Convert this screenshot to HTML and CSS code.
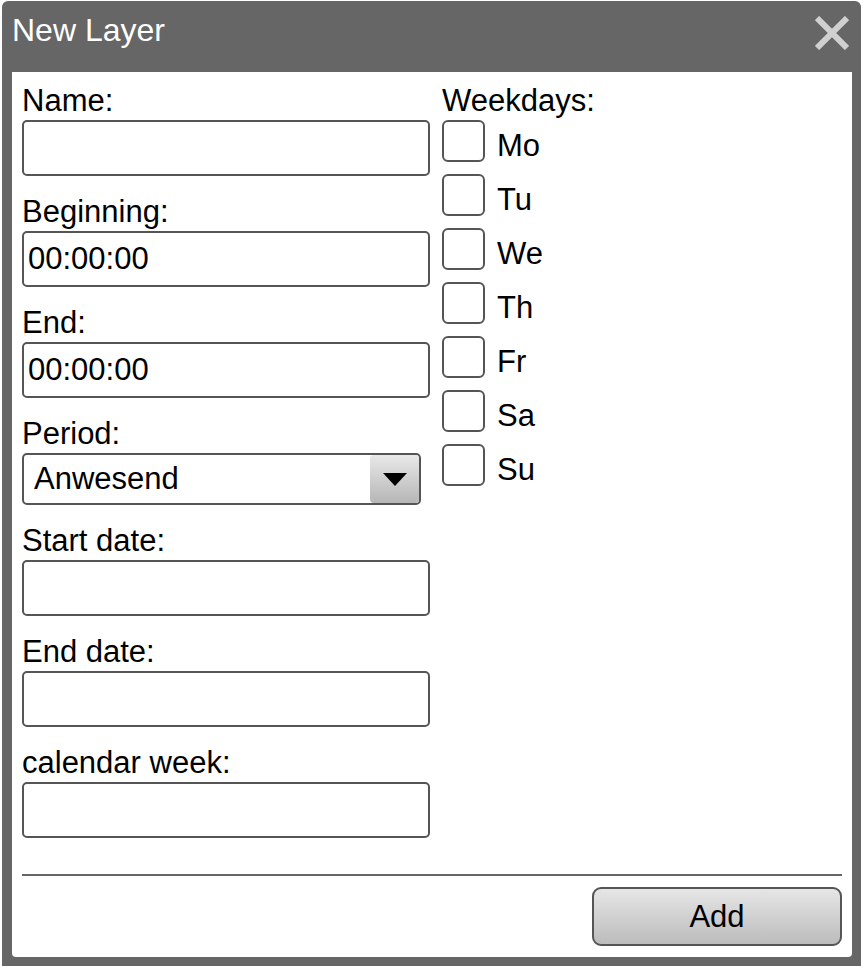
FILE: index.html
```html
<!DOCTYPE html>
<html lang="en">
<head>
<meta charset="utf-8">
<title>New Layer</title>
<link rel="stylesheet" href="styles.css">
</head>
<body>
<div class="dialog">
  <div class="titlebar">
    <span class="title">New Layer</span>
    <button class="close" aria-label="Close">
      <svg width="34" height="34" viewBox="0 0 34 34"><path d="M2 2 L32 32 M32 2 L2 32" stroke="#d0d0d0" stroke-width="6" fill="none"/></svg>
    </button>
  </div>
  <div class="content">
    <div class="columns">
      <div class="col-left">
        <div class="field">
          <label class="label">Name:</label>
          <input class="input" type="text" value="">
        </div>
        <div class="field">
          <label class="label">Beginning:</label>
          <input class="input" type="text" value="00:00:00">
        </div>
        <div class="field">
          <label class="label">End:</label>
          <input class="input" type="text" value="00:00:00">
        </div>
        <div class="field">
          <label class="label">Period:</label>
          <div class="select">
            <span class="select-value">Anwesend</span>
            <span class="select-btn"><span class="tri"></span></span>
          </div>
        </div>
        <div class="field">
          <label class="label">Start date:</label>
          <input class="input" type="text" value="">
        </div>
        <div class="field">
          <label class="label">End date:</label>
          <input class="input" type="text" value="">
        </div>
        <div class="field last">
          <label class="label">calendar week:</label>
          <input class="input" type="text" value="">
        </div>
      </div>
      <div class="col-right">
        <div class="label">Weekdays:</div>
        <div class="days">
          <label class="day"><input type="checkbox" class="cb"><span>Mo</span></label>
          <label class="day"><input type="checkbox" class="cb"><span>Tu</span></label>
          <label class="day"><input type="checkbox" class="cb"><span>We</span></label>
          <label class="day"><input type="checkbox" class="cb"><span>Th</span></label>
          <label class="day"><input type="checkbox" class="cb"><span>Fr</span></label>
          <label class="day"><input type="checkbox" class="cb"><span>Sa</span></label>
          <label class="day"><input type="checkbox" class="cb"><span>Su</span></label>
        </div>
      </div>
    </div>
    <div class="sep"></div>
    <div class="footer">
      <button class="btn-add">Add</button>
    </div>
  </div>
</div>
</body>
</html>
```

FILE: styles.css
```css
html, body {
  margin: 0;
  padding: 0;
  background: #ffffff;
  overflow: hidden;
}
body {
  font-family: "Liberation Sans", Arial, sans-serif;
  color: #000;
}
.dialog {
  margin: 1px 0 0 2px;
  width: 859px;
  height: 975px;
  background: #666666;
  border-radius: 6px 6px 0 0;
  display: flex;
  flex-direction: column;
}
.titlebar {
  height: 71px;
  flex: none;
  display: flex;
  align-items: flex-start;
  justify-content: space-between;
  padding: 0 12px 0 10px;
  box-sizing: border-box;
}
.title {
  color: #ffffff;
  font-size: 32px;
  line-height: 36px;
  margin-top: 11px;
}
.close {
  margin-top: 15px;
  padding: 0;
  border: 0;
  background: none;
  width: 34px;
  height: 34px;
  display: block;
}
.close svg { display: block; }
.content {
  background: #ffffff;
  margin: 0 9px 0 10px;
  padding: 14px 10px 11px 10px;
  border-radius: 0 0 4px 4px;
  height: 885px;
  box-sizing: border-box;
}
.columns {
  display: flex;
  gap: 12px;
}
.col-left {
  width: 408px;
  flex: none;
}
.col-right {
  flex: 1;
}
.field {
  margin-bottom: 21px;
}
.field.last { margin-bottom: 0; }
.label {
  display: block;
  font-size: 31px;
  line-height: 30px;
  height: 30px;
  padding-bottom: 4px;
}
.input {
  display: block;
  box-sizing: border-box;
  width: 408px;
  height: 56px;
  margin: 0;
  border: 2px solid #555555;
  border-radius: 5px;
  padding: 0 4px;
  font-family: "Liberation Sans", Arial, sans-serif;
  font-size: 31px;
  color: #000;
  background: #fff;
  outline: none;
}
.select {
  box-sizing: border-box;
  width: 399px;
  height: 52px;
  border: 2px solid #555555;
  border-radius: 5px;
  display: flex;
  align-items: center;
  justify-content: space-between;
  padding-left: 10px;
}
.select-value {
  font-size: 31px;
}
.select-btn {
  width: 49px;
  height: 48px;
  border-radius: 4px;
  background: linear-gradient(#e8e8e8, #b6b6b6);
  display: flex;
  align-items: center;
  justify-content: center;
}
.tri {
  width: 0;
  height: 0;
  border-left: 12px solid transparent;
  border-right: 12px solid transparent;
  border-top: 13px solid #000;
  margin-left: 1px;
}
.days {
  display: flex;
  flex-direction: column;
  gap: 12px;
}
.day {
  display: flex;
  align-items: center;
  gap: 12px;
  height: 42px;
  font-size: 31px;
}
.day span { padding-top: 10px; line-height: 34px; }
.cb {
  appearance: none;
  -webkit-appearance: none;
  margin: 0;
  width: 43px;
  height: 42px;
  box-sizing: border-box;
  border: 2px solid #555555;
  border-radius: 6px;
  background: #fff;
}
.sep {
  margin-top: 36px;
  height: 2px;
  background: #666666;
}
.footer {
  display: flex;
  justify-content: flex-end;
  padding-top: 11px;
}
.btn-add {
  width: 250px;
  height: 59px;
  box-sizing: border-box;
  border: 2px solid #555555;
  border-radius: 9px;
  background: linear-gradient(#e6e6e6, #bcbcbc);
  font-family: "Liberation Sans", Arial, sans-serif;
  font-size: 31px;
  color: #000;
  padding: 0;
}
```
